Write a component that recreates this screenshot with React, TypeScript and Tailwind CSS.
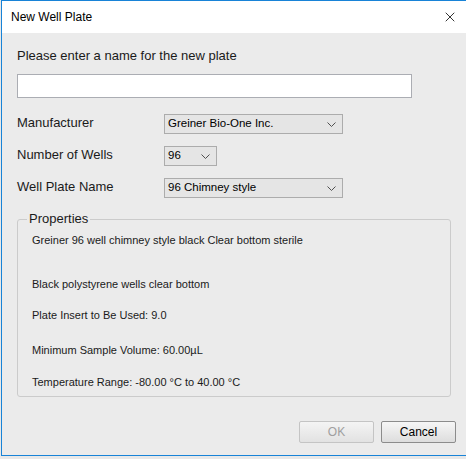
import { X } from 'lucide-react';

const font = { fontFamily: '"Liberation Sans", Arial, sans-serif' };

function Chevron() {
  return (
    <svg width="9" height="5" viewBox="0 0 9 5" className="shrink-0">
      <path d="M0.5 0.5 L4.5 4.5 L8.5 0.5" fill="none" stroke="#505050" strokeWidth="1" />
    </svg>
  );
}

function Select({ value, width }: { value: string; width: string }) {
  return (
    <div
      className={`flex h-[20px] ${width} items-center justify-between border border-[#acacac] bg-[#e5e5e5] pl-[3px] pr-[6px] text-[11.5px] text-black`}
    >
      <span>{value}</span>
      <Chevron />
    </div>
  );
}

const PROPS = [
  { text: 'Greiner 96 well chimney style black Clear bottom sterile', mt: 'mt-[14px]' },
  { text: 'Black polystyrene wells clear bottom', mt: 'mt-[31px]' },
  { text: 'Plate Insert to Be Used: 9.0', mt: 'mt-[18px]' },
  { text: 'Minimum Sample Volume: 60.00µL', mt: 'mt-[22px]' },
  { text: 'Temperature Range: -80.00 °C to 40.00 °C', mt: 'mt-[19px]' },
];

export default function App() {
  return (
    <div className="h-[459px] w-[466px] overflow-hidden bg-[#e8e8e8]" style={font}>
      <div className="ml-[1px] flex h-[456px] flex-col border-b border-l border-t border-[#1883d7] bg-[#ebebeb]">
        {/* title bar */}
        <div className="flex h-[32px] items-center justify-between bg-white pl-[9px] pr-[8px]">
          <span className="text-[12px] text-black">New Well Plate</span>
          <X className="h-[16px] w-[16px] text-black" strokeWidth={1.2} />
        </div>

        <div className="flex flex-1 flex-col pl-[15px] pr-[10px]">
          <p className="mt-[15px] text-[13px] leading-[16px] text-[#1a1a1a]">Please enter a name for the new plate</p>
          <div className="mt-[10px] h-[24px] w-[395px] border border-[#abadb3] bg-white" />

          <div className="mt-[16px] grid grid-cols-[147px_1fr] gap-y-[12px]">
            <span className="text-[13px] leading-[18px] text-[#1a1a1a]">Manufacturer</span>
            <Select value="Greiner Bio-One Inc." width="w-[179px]" />
            <span className="text-[13px] leading-[18px] text-[#1a1a1a]">Number of Wells</span>
            <Select value="96" width="w-[53px]" />
            <span className="text-[13px] leading-[18px] text-[#1a1a1a]">Well Plate Name</span>
            <Select value="96 Chimney style" width="w-[179px]" />
          </div>

          <div className="relative mt-[21px] h-[178px] w-[434px] rounded-[3px] border border-[#cbcbcb] pl-[14px]">
            <span className="absolute -top-[9px] left-[9px] bg-[#ebebeb] px-[2px] text-[13px] leading-[16px] text-[#1a1a1a]">
              Properties
            </span>
            {PROPS.map((p) => (
              <p key={p.text} className={`${p.mt} text-[11px] leading-[13px] text-[#1a1a1a]`}>
                {p.text}
              </p>
            ))}
          </div>

          <div className="mt-[24px] flex justify-end gap-[7px]">
            <button className="h-[22px] w-[75px] rounded-[2px] border border-[#c4c4c4] bg-gradient-to-b from-[#f4f4f4] to-[#e2e2e2] text-[12px] text-[#9f9f9f]">
              OK
            </button>
            <button className="h-[22px] w-[75px] rounded-[2px] border border-[#8c8c8c] bg-gradient-to-b from-[#f6f6f6] to-[#dddddd] text-[12px] text-black">
              Cancel
            </button>
          </div>
        </div>
      </div>
    </div>
  );
}
